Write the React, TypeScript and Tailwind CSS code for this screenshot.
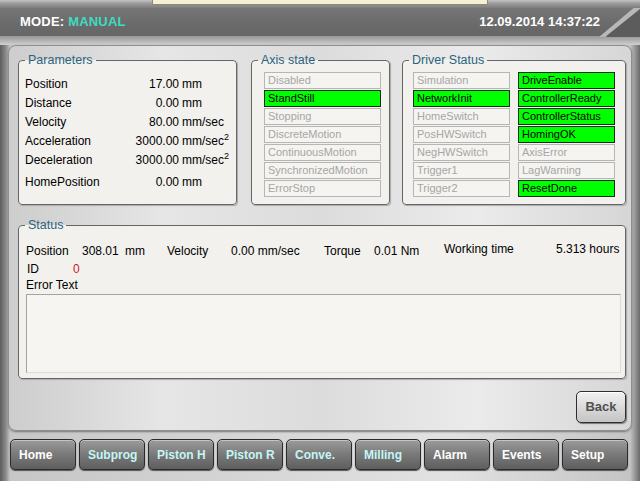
const params = [
  { label: "Position", value: "17.00", unit: "mm" },
  { label: "Distance", value: "0.00", unit: "mm" },
  { label: "Velocity", value: "80.00", unit: "mm/sec" },
  { label: "Acceleration", value: "3000.00", unit: "mm/sec", sq: true },
  { label: "Deceleration", value: "3000.00", unit: "mm/sec", sq: true },
];

const axisStates = [
  { name: "Disabled", on: false },
  { name: "StandStill", on: true },
  { name: "Stopping", on: false },
  { name: "DiscreteMotion", on: false },
  { name: "ContinuousMotion", on: false },
  { name: "SynchronizedMotion", on: false },
  { name: "ErrorStop", on: false },
];

const driverLeft = [
  { name: "Simulation", on: false },
  { name: "NetworkInit", on: true },
  { name: "HomeSwitch", on: false },
  { name: "PosHWSwitch", on: false },
  { name: "NegHWSwitch", on: false },
  { name: "Trigger1", on: false },
  { name: "Trigger2", on: false },
];

const driverRight = [
  { name: "DriveEnable", on: true },
  { name: "ControllerReady", on: true },
  { name: "ControllerStatus", on: true },
  { name: "HomingOK", on: true },
  { name: "AxisError", on: false },
  { name: "LagWarning", on: false },
  { name: "ResetDone", on: true },
];

const navItems = [
  { name: "Home", cyan: false },
  { name: "Subprog", cyan: true },
  { name: "Piston H", cyan: true },
  { name: "Piston R", cyan: true },
  { name: "Conve.", cyan: true },
  { name: "Milling", cyan: true },
  { name: "Alarm", cyan: false },
  { name: "Events", cyan: false },
  { name: "Setup", cyan: false },
];

function StateBox({ name, on, w }: { name: string; on: boolean; w: string }) {
  return (
    <div
      className={`${w} h-[17px] border pl-[3px] text-[11px] leading-[15px] whitespace-nowrap overflow-hidden ${
        on
          ? "bg-[#00ff00] border-[#1c2a1c] text-black"
          : "bg-[#f5f4f0] border-[#b6b6b6] text-[#a6a6a6]"
      }`}
    >
      {name}
    </div>
  );
}

function Legend({ children }: { children: React.ReactNode }) {
  return (
    <legend className="ml-[6px] px-[3px] text-[12.5px] leading-[13px] text-[#2a6480]">
      {children}
    </legend>
  );
}

export default function App() {
  return (
    <div className="w-[640px] h-[481px] overflow-hidden flex flex-col font-['Liberation_Sans',Arial,sans-serif] text-black bg-[linear-gradient(90deg,#5c5c5c_0px,#8c8c8c_6px,#c6c6c6_10px,#d6d6d6_40%,#e2e2e2_70%,#c4c4c4_630px,#6a6a6a_640px)]">
      {/* top strip */}
      <div className="h-[8px] bg-[linear-gradient(180deg,#c2c2c2_0%,#9a9a9a_45%,#7c7c7c_100%)]">
        <div className="ml-[152px] w-[336px] h-[5px] bg-[#f4f0d6] border border-t-0 border-[#8c8a72]" />
      </div>

      {/* header */}
      <div className="h-[29px] flex items-center bg-[linear-gradient(180deg,#767676_0%,#6a6a6a_60%,#666666_100%)] border-b border-[#9a9a9a]">
        <div className="pl-[20px] text-[13px] font-bold text-white tracking-[0.2px]">
          MODE: <span className="text-[#3fdcc0]">MANUAL</span>
        </div>
        <div className="ml-auto text-[13px] font-bold text-white">12.09.2014 14:37:22</div>
        <svg width="44" height="29" viewBox="0 0 44 29" className="ml-[-4px]">
          <polygon points="10,29 44,0 44,29" fill="#5c5c5c" />
          <polygon points="3,29 9,29 44,1 44,-2 40,-2" fill="#b8b8b8" />
        </svg>
      </div>

      <div className="h-[8px] bg-[linear-gradient(180deg,#9c9c9c,#cfcfcf)]" />

      {/* main panel */}
      <div className="ml-[8px] w-[624px] h-[386px] rounded-[8px] border border-[#8e8e8e] shadow-[0_1px_2px_#777] bg-[linear-gradient(90deg,#cdcdcd_0%,#e6e6e6_25%,#dcdcdc_50%,#ebebeb_75%,#d6d6d6_100%)] pt-[8px] flex flex-col">
        <div className="flex pl-[9px]">
          {/* Parameters */}
          <fieldset className="w-[219px] h-[151px] border border-[#666] rounded-[4px] bg-[#f2f1ed] shadow-[1px_1px_1px_#aaa]">
            <Legend>Parameters</Legend>
            <div className="pl-[6px] pt-[7px] text-[12px]">
              {params.map((p) => (
                <div key={p.label} className="flex h-[19px] items-center">
                  <span className="w-[100px]">{p.label}</span>
                  <span className="w-[54px] text-right">{p.value}</span>
                  <span className="ml-[3px]">
                    {p.unit}
                    {p.sq && <sup className="text-[9px] top-[-5px]">2</sup>}
                  </span>
                </div>
              ))}
              <div className="flex h-[19px] items-center mt-[3px]">
                <span className="w-[100px]">HomePosition</span>
                <span className="w-[54px] text-right">0.00</span>
                <span className="ml-[3px]">mm</span>
              </div>
            </div>
          </fieldset>

          {/* Axis state */}
          <fieldset className="ml-[14px] w-[139px] h-[151px] border border-[#666] rounded-[4px] bg-[#f2f1ed] shadow-[1px_1px_1px_#aaa]">
            <Legend>Axis state</Legend>
            <div className="pl-[12px] pt-[5px] flex flex-col gap-[1px]">
              {axisStates.map((s) => (
                <StateBox key={s.name} name={s.name} on={s.on} w="w-[117px]" />
              ))}
            </div>
          </fieldset>

          {/* Driver Status */}
          <fieldset className="ml-[12px] w-[224px] h-[151px] border border-[#666] rounded-[4px] bg-[#f2f1ed] shadow-[1px_1px_1px_#aaa]">
            <Legend>Driver Status</Legend>
            <div className="pl-[10px] pt-[5px] flex gap-[8px]">
              <div className="flex flex-col gap-[1px]">
                {driverLeft.map((s) => (
                  <StateBox key={s.name} name={s.name} on={s.on} w="w-[97px]" />
                ))}
              </div>
              <div className="flex flex-col gap-[1px]">
                {driverRight.map((s) => (
                  <StateBox key={s.name} name={s.name} on={s.on} w="w-[97px]" />
                ))}
              </div>
            </div>
          </fieldset>
        </div>

        {/* Status */}
        <fieldset className="ml-[9px] mt-[14px] w-[608px] h-[160px] border border-[#666] rounded-[4px] bg-[#f2f1ed] shadow-[1px_1px_1px_#aaa]">
          <Legend>Status</Legend>
          <div className="pl-[7px] pt-[11px] text-[12px]">
            <div className="flex h-[16px] items-center whitespace-nowrap">
              <span className="w-[56px]">Position</span>
              <span className="w-[43px]">308.01</span>
              <span className="w-[42px]">mm</span>
              <span className="w-[64px]">Velocity</span>
              <span className="w-[93px]">0.00 mm/sec</span>
              <span className="w-[50px]">Torque</span>
              <span className="w-[70px]">0.01 Nm</span>
              <span className="w-[112px] relative top-[-2px]">Working time</span>
              <span className="relative top-[-2px]">5.313 hours</span>
            </div>
            <div className="flex h-[18px] items-center mt-[1px]">
              <span className="w-[47px] pl-[1px]">ID</span>
              <span className="text-[#d02020]">0</span>
            </div>
            <div className="h-[15px] leading-[15px]">Error Text</div>
            <div className="w-[595px] h-[79px] mt-[1px] bg-[#f6f5f2] border border-[#a4a4a4] border-b-[#dcdcdc] border-r-[#dcdcdc]" />
          </div>
        </fieldset>

        {/* Back */}
        <div className="flex justify-end pr-[5px] mt-[12px]">
          <button className="w-[50px] h-[32px] rounded-[5px] border border-[#2e2e2e] bg-[linear-gradient(180deg,#f2f2f2_0%,#dadada_50%,#c4c4c4_100%)] shadow-[inset_0_1px_0_#fff,1px_1px_1px_#777] text-[13px] font-bold text-[#505050]">
            Back
          </button>
        </div>
      </div>

      {/* navigation */}
      <div className="flex gap-[3px] pl-[10px] mt-[8px]">
        {navItems.map((n) => (
          <button
            key={n.name}
            className={`w-[66px] h-[31px] rounded-[5px] border border-[#2a2a2a] bg-[linear-gradient(180deg,#9c9c9c_0%,#7c7c7c_45%,#5e5e5e_100%)] shadow-[inset_0_1px_0_#c4c4c4,0_1px_1px_#555] text-left pl-[8px] text-[12px] font-bold ${
              n.cyan ? "text-[#c4f6f6]" : "text-white"
            }`}
          >
            {n.name}
          </button>
        ))}
      </div>
    </div>
  );
}
